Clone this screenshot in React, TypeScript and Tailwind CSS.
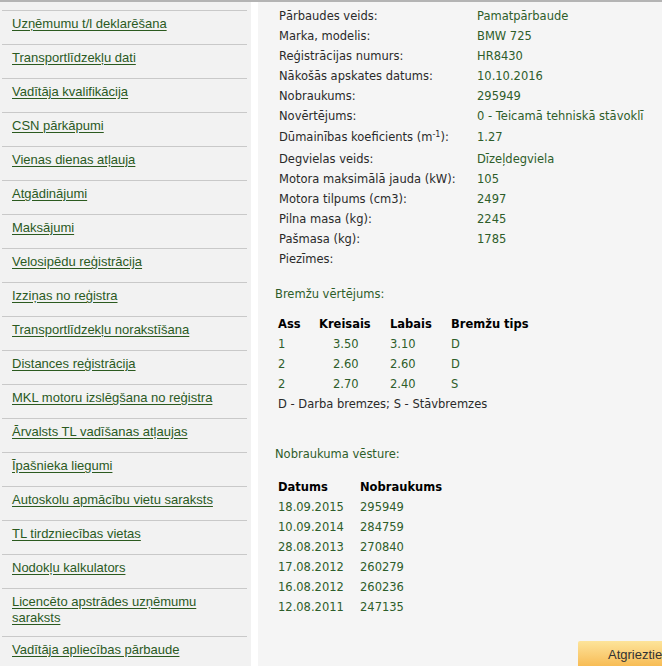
import React from 'react';

const menu: string[] = [
  'Uzņēmumu t/l deklarēšana',
  'Transportlīdzekļu dati',
  'Vadītāja kvalifikācija',
  'CSN pārkāpumi',
  'Vienas dienas atļauja',
  'Atgādinājumi',
  'Maksājumi',
  'Velosipēdu reģistrācija',
  'Izziņas no reģistra',
  'Transportlīdzekļu norakstīšana',
  'Distances reģistrācija',
  'MKL motoru izslēgšana no reģistra',
  'Ārvalsts TL vadīšanas atļaujas',
  'Īpašnieka liegumi',
  'Autoskolu apmācību vietu saraksts',
  'TL tirdzniecības vietas',
  'Nodokļu kalkulators',
  'Licencēto apstrādes uzņēmumu saraksts',
  'Vadītāja apliecības pārbaude',
];

const details: [React.ReactNode, string][] = [
  ['Pārbaudes veids:', 'Pamatpārbaude'],
  ['Marka, modelis:', 'BMW 725'],
  ['Reģistrācijas numurs:', 'HR8430'],
  ['Nākošās apskates datums:', '10.10.2016'],
  ['Nobraukums:', '295949'],
  ['Novērtējums:', '0 - Teicamā tehniskā stāvoklī'],
  [<>Dūmainības koeficients (m<sup className="text-[8px]">-1</sup>):</>, '1.27'],
  ['Degvielas veids:', 'Dīzeļdegviela'],
  ['Motora maksimālā jauda (kW):', '105'],
  ['Motora tilpums (cm3):', '2497'],
  ['Pilna masa (kg):', '2245'],
  ['Pašmasa (kg):', '1785'],
  ['Piezīmes:', ''],
];

const brakes = [
  ['1', '3.50', '3.10', 'D'],
  ['2', '2.60', '2.60', 'D'],
  ['2', '2.70', '2.40', 'S'],
];

const history = [
  ['18.09.2015', '295949'],
  ['10.09.2014', '284759'],
  ['28.08.2013', '270840'],
  ['17.08.2012', '260279'],
  ['16.08.2012', '260236'],
  ['12.08.2011', '247135'],
];

const App: React.FC = () => {
  return (
    <div className="w-[662px] h-[666px] overflow-hidden bg-white border-t-2 border-[#b4b4b4] flex">
      <aside className="w-[251px] shrink-0 bg-[#f2f2f2] pt-[8px] pl-[2px] pr-[4px] font-['Liberation_Sans',Arial,sans-serif] text-[13px]">
        {menu.map(m => (
          <div key={m} className="border-t border-[#c9c9c9] pl-[10px] pr-2 pt-[5px] pb-[10px] leading-[16px] min-h-[34px]">
            <a href="#" className="text-[#2b5a1f] underline underline-offset-[2px]">{m}</a>
          </div>
        ))}
      </aside>
      <div className="w-[7px] shrink-0 bg-white" />
      <main className="flex-1 bg-[#f5f5f5] font-['DejaVu_Sans',Verdana,sans-serif] text-[11.5px] text-[#2a2a2a] pl-[20px] pt-[4px] relative">
        <div className="pl-[1px]">
          {details.map(([l, v], i) => (
            <div key={i} className={i === 6 ? 'flex leading-[20px] pt-[1px] h-[23px]' : 'flex leading-[20px]'}>
              <div className="w-[198px] shrink-0">{l}</div>
              <div className="text-[#2e5d2a]">{v}</div>
            </div>
          ))}
        </div>

        <div className="mt-[15px] text-[#2e5d2a] leading-[20px] -ml-[3px]">Bremžu vērtējums:</div>
        <table className="mt-[10px] border-collapse leading-[20px]">
          <thead>
            <tr className="font-bold text-black text-left">
              <th className="w-[41px] font-bold">Ass</th>
              <th className="w-[71px] font-bold">Kreisais</th>
              <th className="w-[61px] font-bold">Labais</th>
              <th className="font-bold">Bremžu tips</th>
            </tr>
          </thead>
          <tbody className="text-[#2e5d2a]">
            {brakes.map((b, i) => (
              <tr key={i}>
                <td>{b[0]}</td>
                <td className="pl-[14px]">{b[1]}</td>
                <td>{b[2]}</td>
                <td>{b[3]}</td>
              </tr>
            ))}
          </tbody>
        </table>
        <div className="leading-[20px]">D - Darba bremzes; S - Stāvbremzes</div>

        <div className="mt-[30px] text-[#2e5d2a] leading-[20px] -ml-[3px]">Nobraukuma vēsture:</div>
        <table className="mt-[13px] border-collapse leading-[20px]">
          <thead>
            <tr className="text-black text-left">
              <th className="w-[82px] font-bold">Datums</th>
              <th className="font-bold">Nobraukums</th>
            </tr>
          </thead>
          <tbody className="text-[#2e5d2a]">
            {history.map(h => (
              <tr key={h[0]}>
                <td>{h[0]}</td>
                <td>{h[1]}</td>
              </tr>
            ))}
          </tbody>
        </table>

        <button className="absolute left-[320px] top-[639px] w-[100px] h-[28px] bg-gradient-to-b from-[#fde49a] to-[#f6b74a] text-[#333] text-[13px] font-['Liberation_Sans',Arial,sans-serif] text-left pl-[30px] rounded-tl-[2px]">
          Atgriezties
        </button>
      </main>
    </div>
  );
};

export default App;
